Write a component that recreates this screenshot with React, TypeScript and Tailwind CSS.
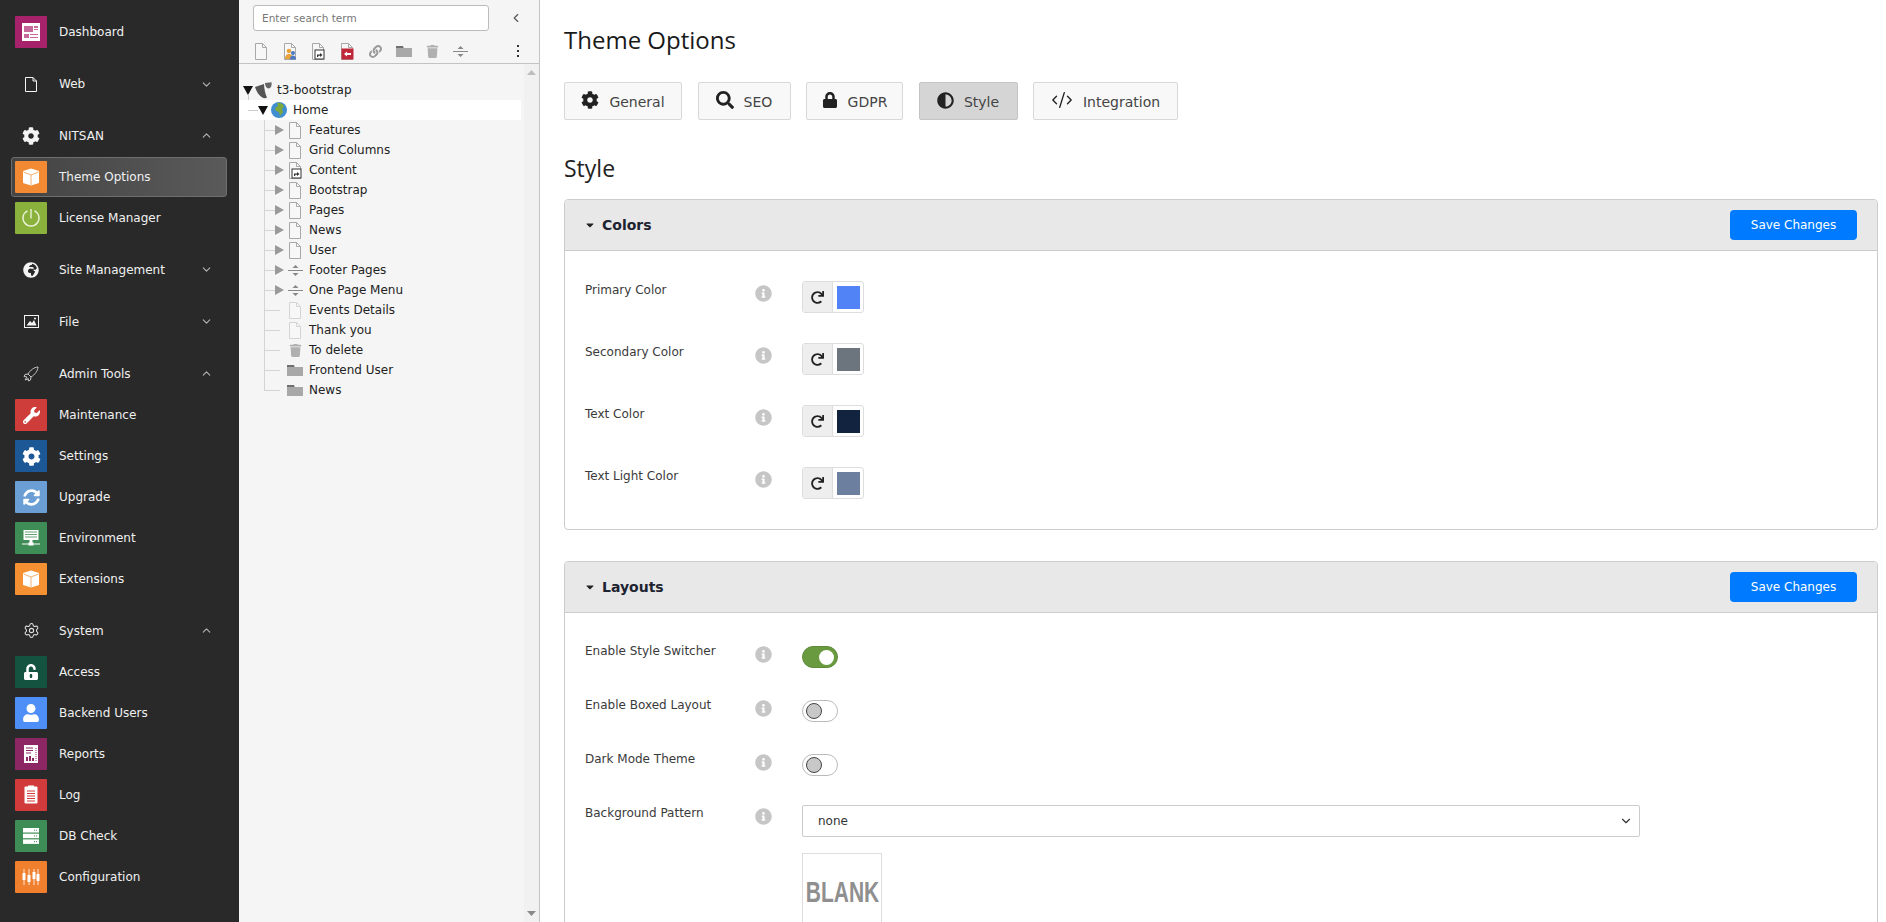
import type { ReactNode } from 'react';
import { FaCog, FaSearch, FaLock, FaAdjust, FaRedo, FaInfoCircle, FaTrash, FaLink, FaCaretDown, FaWrench, FaSyncAlt, FaUnlockAlt, FaUser, FaGlobeAfrica } from 'react-icons/fa';
import { ChevronDown, ChevronUp, ChevronLeft, Settings, CodeXml } from 'lucide-react';

const verdana = 'font-["DejaVu_Sans",Verdana,sans-serif]';

function Box({ fill = '#fff' }: { fill?: string }) {
  return (
    <svg width="20" height="20" viewBox="0 0 20 20">
      <path d="M10 1.500 18 4v12l-8 2.500L2 16V4z" fill={fill} />
      <path d="M2.500 5 10 8l7.500-3M10 8v10" fill="none" stroke="#f0b070" strokeWidth="1" />
    </svg>
  );
}

const squareIcons: Record<string, ReactNode> = {
  dashboard: (
    <svg width="20" height="20" viewBox="0 0 20 20">
      <rect x="1" y="1" width="18" height="18" fill="#fff" />
      <rect x="3" y="4" width="9" height="6" fill="#c66a9c" />
      <rect x="13" y="4" width="4" height="2" fill="#c66a9c" />
      <rect x="13" y="7" width="4" height="1" fill="#c66a9c" />
      <rect x="3" y="12" width="5" height="4" fill="#c66a9c" />
      <rect x="9" y="12" width="8" height="1" fill="#c66a9c" />
      <rect x="9" y="15" width="8" height="1" fill="#c66a9c" />
    </svg>
  ),
  box: <Box />,
  power: (
    <svg width="20" height="20" viewBox="0 0 20 20" fill="none" stroke="#e9f2d4" strokeWidth="1.400">
      <path d="M6.500 2.800a8 8 0 1 0 7 0" />
      <path d="M10 1v9.500" />
    </svg>
  ),
  wrench: <FaWrench size={17} color="#fff" />,
  cog: <FaCog size={19} color="#fff" />,
  sync: <FaSyncAlt size={17} color="#fff" />,
  environment: (
    <svg width="18" height="18" viewBox="0 0 18 18" fill="#fff">
      <rect x="1.500" y="1" width="15" height="10" />
      <path d="M3 3h12M3 5.500h12M3 8h12" stroke="#3e8c56" strokeWidth="0.800" />
      <rect x="7.500" y="11" width="3" height="3" />
      <rect x="0" y="14.500" width="18" height="1" />
      <rect x="6.500" y="13.500" width="5" height="3" />
    </svg>
  ),
  access: <FaUnlockAlt size={16} color="#fff" />,
  user: <FaUser size={18} color="#fff" />,
  reports: (
    <svg width="18" height="20" viewBox="0 0 18 20">
      <rect x="2" y="1" width="14" height="18" fill="#fff" />
      <path d="M4 4h7M4 6.500h7M4 9h5" stroke="#8d2763" strokeWidth="1" />
      <path d="M5 17v-4M8 17v-5M11 17v-3" stroke="#8d2763" strokeWidth="2" />
      <path d="M14 4v14" stroke="#8d2763" strokeWidth="1" strokeDasharray="1 1" />
    </svg>
  ),
  log: (
    <svg width="18" height="20" viewBox="0 0 18 20">
      <rect x="2.500" y="1.500" width="13" height="17" rx="1" fill="#fff" />
      <rect x="6" y="0.500" width="6" height="2" fill="#fff" />
      <path d="M5 6h8M5 8.500h8M5 11h8M5 13.500h8M5 16h8" stroke="#d13b3b" strokeWidth="1" />
    </svg>
  ),
  db: (
    <svg width="18" height="18" viewBox="0 0 18 18" fill="#fff">
      <rect x="1" y="1" width="16" height="4.500" />
      <rect x="1" y="6.700" width="16" height="4.500" />
      <rect x="1" y="12.400" width="16" height="4.500" />
      <path d="M12 3.200h4M12 8.900h4M12 14.600h4" stroke="#3e8c56" strokeWidth="1" strokeDasharray="1 1" />
    </svg>
  ),
  config: (
    <svg width="20" height="18" viewBox="0 0 20 18" fill="#fff">
      <path d="M3 1v16M8 1v16M13 1v16M17 1v16" stroke="#fff" strokeWidth="0.800" />
      <rect x="1.500" y="5" width="3" height="7" />
      <rect x="6.500" y="7" width="3" height="7" />
      <rect x="11.500" y="4" width="3" height="7" />
      <rect x="15.500" y="6" width="3" height="7" />
    </svg>
  ),
};

function Module({ label, color, icon, active }: { label: string; color: string; icon: string; active?: boolean }) {
  return (
    <li className={`flex h-[41px] items-center pl-[15px] ${active ? 'relative' : ''}`}>
      {active && (
        <span className="absolute left-[11px] right-[12px] top-px bottom-0 rounded-[3px] border border-[#6e6e6e] bg-gradient-to-r from-[#444] to-[#5a5a5a]" />
      )}
      <span className="relative flex h-8 w-8 items-center justify-center rounded-[1px]" style={{ backgroundColor: color }}>
        {squareIcons[icon]}
      </span>
      <span className="relative ml-[12px] text-[12px] text-[#f0f0f0]">{label}</span>
    </li>
  );
}

function GroupHead({ label, icon, open, closed }: { label: string; icon: ReactNode; open?: boolean; closed?: boolean }) {
  return (
    <div className="flex h-[41px] items-center pl-[15px] pr-[26px]">
      <span className="flex h-8 w-8 items-center justify-center">{icon}</span>
      <span className="ml-[12px] flex-1 text-[12px] text-[#f0f0f0]">{label}</span>
      {open && <ChevronUp size={13} color="#b5b5b5" />}
      {closed && <ChevronDown size={13} color="#b5b5b5" />}
    </div>
  );
}

function Sidebar() {
  return (
    <aside className={`w-[239px] shrink-0 bg-[#292929] pt-[11.500px] ${verdana}`}>
      <ul className="mb-[11px]">
        <Module label="Dashboard" color="#a6236b" icon="dashboard" />
      </ul>
      <div className="mb-[10.500px]">
        <GroupHead
          label="Web"
          closed
          icon={
            <svg width="12" height="15" viewBox="0 0 12 15" fill="none" stroke="#f4f4f4" strokeWidth="1">
              <path d="M.5.5h7.500l3.500 3.500v10.500H.5zM8 .5V4h3.500" />
            </svg>
          }
        />
      </div>
      <div className="mb-[11px]">
        <GroupHead label="NITSAN" open icon={<FaCog size={18} color="#f4f4f4" />} />
        <ul>
          <Module label="Theme Options" color="#f28a33" icon="box" active />
          <Module label="License Manager" color="#8ab13b" icon="power" />
        </ul>
      </div>
      <div className="mb-[11px]">
        <GroupHead label="Site Management" closed icon={<FaGlobeAfrica size={16} color="#f4f4f4" />} />
      </div>
      <div className="mb-[11px]">
        <GroupHead
          label="File"
          closed
          icon={
            <svg width="15" height="13" viewBox="0 0 15 13">
              <rect x=".5" y=".5" width="14" height="12" fill="none" stroke="#f4f4f4" />
              <path d="M2.500 10.500 6 6l2 2 2-3 2.500 5.500z" fill="#f4f4f4" />
              <circle cx="11" cy="3.500" r="1" fill="#f4f4f4" />
            </svg>
          }
        />
      </div>
      <div className="mb-[10.500px]">
        <GroupHead
          label="Admin Tools"
          open
          icon={
            <svg width="16" height="16" viewBox="0 0 16 16" fill="none" stroke="#c8c8c8" strokeWidth="1">
              <path d="M15 1C11 1.300 7.500 4 5 8l3 3c4-2.500 6.700-6 7-10zM5 8l-3 .5L1 10.500l3 .5M8 11l-.5 3-2 1-.5-3M4 11l-2 3 3-1" />
            </svg>
          }
        />
        <ul className="pt-[0.500px]">
          <Module label="Maintenance" color="#cf3d3a" icon="wrench" />
          <Module label="Settings" color="#1c5796" icon="cog" />
          <Module label="Upgrade" color="#6b9ed4" icon="sync" />
          <Module label="Environment" color="#3e8c56" icon="environment" />
          <Module label="Extensions" color="#f59033" icon="box" />
        </ul>
      </div>
      <div>
        <GroupHead label="System" open icon={<Settings size={17} color="#e0e0e0" strokeWidth={1.5} />} />
        <ul>
          <Module label="Access" color="#155341" icon="access" />
          <Module label="Backend Users" color="#4e8ef7" icon="user" />
          <Module label="Reports" color="#8d2763" icon="reports" />
          <Module label="Log" color="#d13b3b" icon="log" />
          <Module label="DB Check" color="#3e8c56" icon="db" />
          <Module label="Configuration" color="#f07f2e" icon="config" />
        </ul>
      </div>
    </aside>
  );
}

function PageIcon({ overlay, faded }: { overlay?: 'shortcut' | 'users' | 'mount'; faded?: boolean }) {
  const stroke = faded ? '#d4d4d4' : '#a8a8a8';
  return (
    <svg width="14" height="17" viewBox="0 0 14 17">
      <path d="M1.500.5h7l4 4v12h-11z" fill="#f7f7f7" stroke={stroke} />
      <path d="M8.500.5v4h4" fill="none" stroke={stroke} />
      {overlay === 'shortcut' && (
        <g>
          <rect x="4" y="7" width="9" height="9" fill="#fff" stroke="#333" />
          <path d="M6 14v-2.500h3V10l2.500 2-2.500 2v-1.200H7.200V14z" fill="#333" />
        </g>
      )}
      {overlay === 'users' && (
        <g>
          <circle cx="6" cy="8" r="2.300" fill="#e8a33d" />
          <path d="M2 16c0-4 2-5 4-5s4 1 4 5z" fill="#e8a33d" />
          <circle cx="10" cy="10" r="2" fill="#4a78c2" />
          <path d="M7 16.500c0-3 1.500-4 3-4s3 1 3 4z" fill="#4a78c2" />
        </g>
      )}
      {overlay === 'mount' && (
        <g>
          <rect x="1.500" y="5.500" width="12" height="11" fill="#c0283a" />
          <path d="M4 11l3-2.500V10h4v2H7v1.500z" fill="#fff" />
        </g>
      )}
    </svg>
  );
}

function FolderIcon() {
  return (
    <svg width="16" height="12" viewBox="0 0 16 12">
      <path d="M0 1h7l1 2h8v9H0z" fill="#9a9a9a" />
      <rect x="0" y="3" width="16" height="9" fill="#a8a8a8" />
      <rect x="0" y="1" width="7" height="2" fill="#6f6f6f" />
    </svg>
  );
}

function DividerIcon() {
  return (
    <svg width="15" height="13" viewBox="0 0 15 13" fill="#888">
      <path d="M4.500 4h6L7.500 1zM4.500 9h6l-3 3z" />
      <rect x="0" y="6" width="15" height="1" />
    </svg>
  );
}

function TrashIcon() {
  return <FaTrash size={13} color="#b0b0b0" />;
}

function Triangle({ dir, color }: { dir: 'down' | 'right'; color: string }) {
  return dir === 'down' ? (
    <svg width="10" height="9" viewBox="0 0 10 9" className="shrink-0">
      <path d="M0 0h10L5 9z" fill={color} />
    </svg>
  ) : (
    <svg width="9" height="10" viewBox="0 0 9 10" className="shrink-0">
      <path d="M0 0l9 5-9 5z" fill={color} />
    </svg>
  );
}

const treeItems: { label: string; icon: ReactNode; toggle?: boolean }[] = [
  { label: 'Features', icon: <PageIcon />, toggle: true },
  { label: 'Grid Columns', icon: <PageIcon />, toggle: true },
  { label: 'Content', icon: <PageIcon overlay="shortcut" />, toggle: true },
  { label: 'Bootstrap', icon: <PageIcon />, toggle: true },
  { label: 'Pages', icon: <PageIcon />, toggle: true },
  { label: 'News', icon: <PageIcon />, toggle: true },
  { label: 'User', icon: <PageIcon />, toggle: true },
  { label: 'Footer Pages', icon: <DividerIcon />, toggle: true },
  { label: 'One Page Menu', icon: <DividerIcon />, toggle: true },
  { label: 'Events Details', icon: <PageIcon faded /> },
  { label: 'Thank you', icon: <PageIcon faded /> },
  { label: 'To delete', icon: <TrashIcon /> },
  { label: 'Frontend User', icon: <FolderIcon /> },
  { label: 'News', icon: <FolderIcon /> },
];

function TreePanel() {
  return (
    <section className={`relative flex w-[301px] shrink-0 flex-col border-r border-[#c3c3c3] bg-[#f5f5f5] ${verdana}`}>
      <div className="h-[64px] shrink-0 border-b border-[#c3c3c3] bg-[#f5f5f5]">
        <div className="flex items-center pt-[5px] pl-[14px]">
          <input
            readOnly
            placeholder="Enter search term"
            className="h-[26px] w-[236px] rounded-[3px] border border-[#bbb] bg-white px-2 text-[10.500px] text-[#333] placeholder:text-[#777]"
          />
          <ChevronLeft size={14} color="#555" className="ml-[20px]" />
        </div>
        <div className="mt-[11px] flex h-[18px] items-center pl-[8px]">
          <span className="flex w-[28.500px] justify-center"><PageIcon /></span>
          <span className="flex w-[28.500px] justify-center"><PageIcon overlay="users" /></span>
          <span className="flex w-[28.500px] justify-center"><PageIcon overlay="shortcut" /></span>
          <span className="flex w-[28.500px] justify-center"><PageIcon overlay="mount" /></span>
          <span className="flex w-[28.500px] justify-center"><FaLink size={13} color="#999" /></span>
          <span className="flex w-[28.500px] justify-center"><FolderIcon /></span>
          <span className="flex w-[28.500px] justify-center"><TrashIcon /></span>
          <span className="flex w-[28.500px] justify-center"><DividerIcon /></span>
          <span className="ml-[42px] flex flex-col gap-[3px]">
            <i className="h-[2px] w-[2px] bg-[#333]" />
            <i className="h-[2px] w-[2px] bg-[#333]" />
            <i className="h-[2px] w-[2px] bg-[#333]" />
          </span>
        </div>
      </div>
      <div className="flex min-h-0 flex-1 text-[12px] text-[#222]">
        <div className="w-[285px] pt-[16px] pl-px">
          <div className="relative flex h-5 items-center pl-[3px]">
            <span className="absolute left-[8px] top-[14px] h-[16px] w-px bg-[#ccc]" />
            <Triangle dir="down" color="#111" />
            <svg width="17" height="17" viewBox="0 0 17 17" className="ml-[2px] shrink-0">
              <path d="M0 5 9 2c.2 5 1.200 10 3 13.500C8 18 2.500 13 0 5z" fill="#555" />
              <path d="M10 1 16.500.2c.6 2.800-.5 6.300-2.800 6.300C11.500 6.500 10 3.500 10 1z" fill="#666" />
            </svg>
            <span className="ml-[5px]">t3-bootstrap</span>
          </div>
          <div className="relative flex h-5 w-[281px] items-center bg-white pl-[18px]">
            <span className="absolute left-[8px] top-[10px] h-px w-[10px] bg-[#ccc]" />
            <Triangle dir="down" color="#111" />
            <span className="relative ml-[3px] block h-4 w-4 overflow-hidden rounded-full bg-[#3f8fd0]">
              <svg width="16" height="16" viewBox="0 0 16 16" className="absolute inset-0">
                <path d="M6 1c3-1 6 1 7 3l-2 3 1 3-3 4-1-4-3-1-1-3 3-2z" fill="#7da83c" />
              </svg>
            </span>
            <span className="ml-[6px]">Home</span>
          </div>
          <ul>
            {treeItems.map((item, i) => (
              <li key={i} className="relative flex h-5 items-center pl-[24px]">
                <span className={`absolute left-[24px] top-0 w-px bg-[#d4d4d4] ${i === treeItems.length - 1 ? 'h-[10px]' : 'h-5'}`} />
                <span className="flex w-[21px] items-center">
                  <span className={`h-px bg-[#d4d4d4] ${item.toggle ? 'w-[11px]' : 'w-[16px]'}`} />
                  {item.toggle && <Triangle dir="right" color="#999" />}
                </span>
                <span className="flex w-5 justify-center">{item.icon}</span>
                <span className="ml-[4px]">{item.label}</span>
              </li>
            ))}
          </ul>
        </div>
        <div className="flex w-[15px] flex-col items-center justify-between bg-[#f1f1f1] py-[6px]">
          <svg width="9" height="5" viewBox="0 0 9 5"><path d="M0 5 4.500 0 9 5z" fill="#bdbdbd" /></svg>
          <svg width="9" height="5" viewBox="0 0 9 5"><path d="M0 0 4.500 5 9 0z" fill="#8a8a8a" /></svg>
        </div>
      </div>
    </section>
  );
}

const tabs: { label: string; icon: ReactNode; width: string; active?: boolean }[] = [
  { label: 'General', icon: <FaCog size={18} />, width: 'w-[118px]' },
  { label: 'SEO', icon: <FaSearch size={18} />, width: 'w-[93px]' },
  { label: 'GDPR', icon: <FaLock size={16} />, width: 'w-[97px]' },
  { label: 'Style', icon: <FaAdjust size={17} />, width: 'w-[99px]', active: true },
  { label: 'Integration', icon: <CodeXml size={22} strokeWidth={1.5} />, width: 'w-[145px]' },
];

function Tabs() {
  return (
    <div className="mt-[26px] flex gap-[15.500px]">
      {tabs.map((tab) => (
        <button
          key={tab.label}
          className={`flex h-[38px] items-center justify-center gap-[10px] rounded-[2px] border text-[14px] text-[#444] ${tab.width} ${
            tab.active ? 'border-[#c4c4c4] bg-[#d5d5d5]' : 'border-[#d8d8d8] bg-[#f8f8f8]'
          } ${verdana}`}
        >
          <span className="-mt-[2px] text-[#222]">{tab.icon}</span>
          <span className="pt-[2px]">{tab.label}</span>
        </button>
      ))}
    </div>
  );
}

function Panel({ title, className, children }: { title: string; className?: string; children: ReactNode }) {
  return (
    <div className={`rounded-[4px] border border-[#ccc] bg-white ${className ?? ''}`}>
      <div className="flex h-[51px] items-center rounded-t-[4px] border-b border-[#ccc] bg-[#e8e8e8] pl-[19px] pr-[20px]">
        <FaCaretDown size={12} color="#222" />
        <span className={`ml-[6px] flex-1 text-[14px] font-bold text-[#1d2330] ${verdana}`}>{title}</span>
        <button className={`h-[30px] w-[127px] rounded-[4px] bg-[#007bff] text-[12px] text-white ${verdana}`}>Save Changes</button>
      </div>
      {children}
    </div>
  );
}

function OptionRow({ label, height, children }: { label: string; height: string; children: ReactNode }) {
  return (
    <div className={`flex items-start ${height}`}>
      <span className={`w-[170px] pt-px text-[12px] leading-[16px] text-[#3a3a3a] ${verdana}`}>{label}</span>
      <span className="flex w-[47px] pt-[4px]">
        <FaInfoCircle size={17} color="#c6c6c6" />
      </span>
      {children}
    </div>
  );
}

function ColorField({ color }: { color: string }) {
  return (
    <div className="flex h-[32px] w-[62px] overflow-hidden rounded-[3px] border border-[#ddd] bg-white">
      <span className="flex w-[30px] items-center justify-center border-r border-[#ddd] bg-[#eee]">
        <FaRedo size={13} color="#222" />
      </span>
      <span className="m-auto h-[23px] w-[23px]" style={{ backgroundColor: color }} />
    </div>
  );
}

function Toggle({ on }: { on?: boolean }) {
  return on ? (
    <span className="mt-[4px] flex h-[22px] w-[36px] items-center justify-end rounded-full border border-[#5f8a3a] bg-[#6a9a3f] pr-[3px]">
      <span className="h-[15px] w-[15px] rounded-full bg-white" />
    </span>
  ) : (
    <span className="mt-[4px] flex h-[22px] w-[36px] items-center rounded-full border border-[#bbb] bg-white pl-[3px]">
      <span className="h-[16px] w-[16px] rounded-full border border-[#444] bg-[#c8c8c8]" />
    </span>
  );
}

const colorRows = [
  { label: 'Primary Color', color: '#5182f6' },
  { label: 'Secondary Color', color: '#6c757d' },
  { label: 'Text Color', color: '#12233f' },
  { label: 'Text Light Color', color: '#6d7f9f' },
];

export default function App() {
  return (
    <div className="flex h-[922px] w-[1886px] overflow-hidden bg-white">
      <Sidebar />
      <TreePanel />
      <main className="min-w-0 flex-1 pl-[24px] pr-[8px] pt-[24px]">
        <h1 className="text-[24px] leading-[32px] text-[#1a1a1a] font-['Open_Sans',sans-serif]">Theme Options</h1>
        <Tabs />
        <h2 className="mt-[34px] text-[23px] leading-[28px] text-[#222] font-['Open_Sans',sans-serif]">Style</h2>
        <Panel title="Colors" className="mt-[17px]">
          <div className="h-[278px] pl-[20px] pt-[30px]">
            {colorRows.map((row) => (
              <OptionRow key={row.label} label={row.label} height="h-[62px]">
                <ColorField color={row.color} />
              </OptionRow>
            ))}
          </div>
        </Panel>
        <Panel title="Layouts" className="mt-[31px] h-[500px]">
          <div className="pl-[20px] pt-[29px]">
            <OptionRow label="Enable Style Switcher" height="h-[54px]"><Toggle on /></OptionRow>
            <OptionRow label="Enable Boxed Layout" height="h-[54px]"><Toggle /></OptionRow>
            <OptionRow label="Dark Mode Theme" height="h-[54px]"><Toggle /></OptionRow>
            <OptionRow label="Background Pattern" height="h-[120px]">
              <div className="mt-px">
                <div className={`flex h-[32px] w-[838px] items-center justify-between rounded-[2px] border border-[#ccc] pl-[15px] pr-[6px] text-[12px] text-[#333] ${verdana}`}>
                  none
                  <ChevronDown size={14} color="#333" />
                </div>
                <div className="mt-[16px] flex h-[90px] w-[80px] items-start justify-center border border-[#ddd] pt-[23px]">
                  <span className="scale-x-[0.7] text-[30px] leading-[30px] font-bold text-[#8f8f8f] font-['Liberation_Sans',sans-serif]">BLANK</span>
                </div>
              </div>
            </OptionRow>
          </div>
        </Panel>
      </main>
    </div>
  );
}
